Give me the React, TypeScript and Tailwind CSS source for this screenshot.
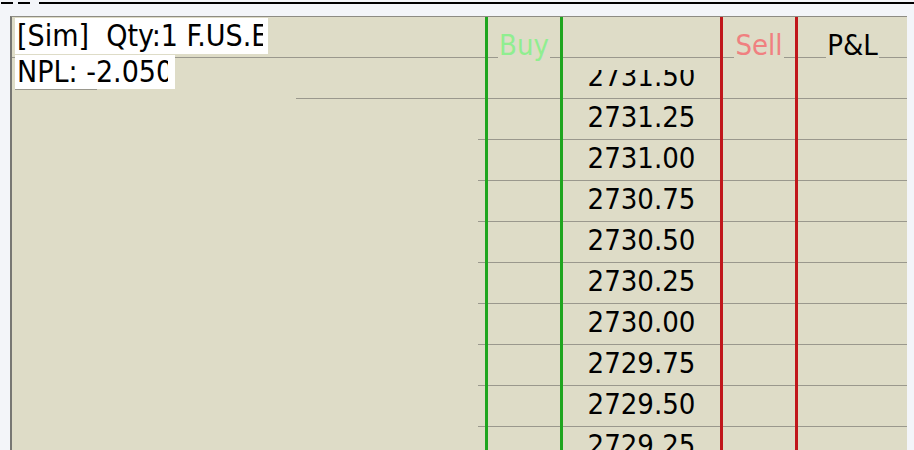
import React from "react";

const prices = [
  "2731.50",
  "2731.25",
  "2731.00",
  "2730.75",
  "2730.50",
  "2730.25",
  "2730.00",
  "2729.75",
  "2729.50",
  "2729.25",
];

function Column({
  className,
  label,
  labelClass,
  showPrices,
}: {
  className: string;
  label?: string;
  labelClass?: string;
  showPrices?: boolean;
}) {
  return (
    <div className={"flex flex-col shrink-0 " + className}>
      <div className="h-[41px] border-b border-[#9a988d] flex items-end justify-center">
        {label && (
          <span className={"relative top-[3px] bg-[#dedcc7] px-px text-[29px] leading-[30px] " + labelClass}>
            {label}
          </span>
        )}
      </div>
      {prices.map((p, i) => (
        <div key={p} className="h-[41px] border-b border-[#9a988d] shrink-0">
          {showPrices &&
            (i === 0 ? (
              <div className="mt-[12px] h-[28px] overflow-hidden">
                <div className="-mt-[12px] text-center text-[29px] leading-[36px] text-black">{p}</div>
              </div>
            ) : (
              <div className="text-center text-[29px] leading-[36px] text-black">{p}</div>
            ))}
        </div>
      ))}
    </div>
  );
}

export default function App() {
  return (
    <div className="w-[914px] h-[450px] overflow-hidden bg-[#f3f5f9] font-['DejaVu_Sans_Condensed','DejaVu_Sans','Noto_Sans',sans-serif]">
      {/* title strip */}
      <div className="h-4 flex items-start pt-[2px]">
        <div className="flex gap-[5px] pl-px">
          <span className="w-3 h-[2px] bg-black" />
          <span className="w-3 h-[2px] bg-black" />
        </div>
        <div className="ml-[9px] flex-1 h-[2px] bg-black" />
      </div>

      <div className="ml-[10px] w-[897px] border-l-2 border-t border-l-[#777773] border-t-[#8e8c84] bg-[#dedcc7] flex">
        {/* left chart area with labels */}
        <div className="w-[466px] shrink-0 flex flex-col">
          <div className="h-[41px] border-b border-[#9a988d] pl-[3px] pt-px">
            <div className="w-[253px] h-[36px] bg-white pl-[2px]">
              <div className="w-[246px] overflow-hidden whitespace-pre text-[30px] leading-[36px] text-black">
                [Sim]  Qty:1 F.US.EP
              </div>
            </div>
          </div>
          <div className="h-[41px] flex flex-col">
            <div className="ml-[3px] -mt-[3px] w-[160px] h-[34px] bg-white pl-[2px]">
              <div className="w-[151px] overflow-hidden whitespace-pre text-[30px] leading-[34px] text-black">
                NPL: -2.050
              </div>
            </div>
            <div className="ml-[3px] w-[82px] h-px bg-[#9a988d]" />
            <div className="flex-1" />
            <div className="ml-[284px] h-px bg-[#9a988d]" />
          </div>
        </div>

        {/* DOM ladder */}
        <div className="flex-1 flex">
          <Column className="w-[7px]" />
          <Column className="w-[75px] border-l-[3px] border-l-[#1fa51f]" label="Buy" labelClass="text-[#90ee90]" />
          <Column className="w-[160px] border-l-[3px] border-l-[#1fa51f]" showPrices />
          <Column className="w-[75px] border-l-[3px] border-l-[#c0161b]" label="Sell" labelClass="text-[#f08080]" />
          <Column className="w-[112px] border-l-[3px] border-l-[#c0161b]" label="P&L" labelClass="text-black" />
        </div>
      </div>
    </div>
  );
}
